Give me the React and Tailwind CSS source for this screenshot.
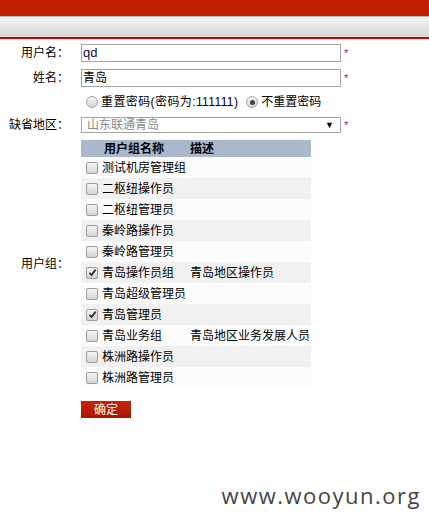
const groups = [
  { name: "测试机房管理组", desc: "", checked: false },
  { name: "二枢纽操作员", desc: "", checked: false },
  { name: "二枢纽管理员", desc: "", checked: false },
  { name: "秦岭路操作员", desc: "", checked: false },
  { name: "秦岭路管理员", desc: "", checked: false },
  { name: "青岛操作员组", desc: "青岛地区操作员", checked: true },
  { name: "青岛超级管理员", desc: "", checked: false },
  { name: "青岛管理员", desc: "", checked: true },
  { name: "青岛业务组", desc: "青岛地区业务发展人员", checked: false },
  { name: "株洲路操作员", desc: "", checked: false },
  { name: "株洲路管理员", desc: "", checked: false },
];

function Checkbox({ checked }) {
  return (
    <span className="flex h-[12px] w-[12px] items-center justify-center rounded-[2px] border border-[#9d9d9d] bg-gradient-to-b from-[#f4f4f4] to-[#d6d6d6]">
      {checked && (
        <svg width="9" height="9" viewBox="0 0 9 9">
          <path d="M1.5 4.8 L3.6 7 L7.6 1.6" fill="none" stroke="#333" strokeWidth="1.8" />
        </svg>
      )}
    </span>
  );
}

function Radio({ checked }) {
  return (
    <span className="flex h-[12px] w-[12px] items-center justify-center rounded-full border border-[#a5a5a5] bg-gradient-to-b from-[#f6f6f6] to-[#d4d4d4]">
      {checked && <span className="h-[5px] w-[5px] rounded-full bg-[#444]" />}
    </span>
  );
}

function Row({ label, children, star }) {
  return (
    <div className="flex items-center">
      <div className="w-[69px] shrink-0 text-right">{label}</div>
      <div className="ml-[12px] flex items-center">
        {children}
        {star && <span className="ml-[3px] text-[11px] text-[#b0105a]">*</span>}
      </div>
    </div>
  );
}

export default function App() {
  return (
    <div
      className="relative h-[523px] w-[429px] overflow-hidden bg-white text-[12px] leading-[16px] text-black"
      style={{ fontFamily: '"Liberation Sans", "Noto Sans CJK SC", sans-serif' }}
    >
      <div className="h-[16px] bg-[#c21f00]" />
      <div className="h-[21px] border-t border-[#b9b9b9] bg-gradient-to-b from-[#f2f2f2] to-[#d9d9d9]" />
      <div className="h-[2px] bg-[#d10000]" />

      <div className="mt-[5px]">
        <Row label="用户名：" star>
          <div className="flex h-[18px] w-[260px] items-center border border-[#a5a5a5] px-[1px] text-[13px] text-[#10104a]">
            qd
          </div>
        </Row>
      </div>
      <div className="mt-[7px]">
        <Row label="姓名：" star>
          <div className="flex h-[18px] w-[260px] items-center border border-[#a5a5a5] px-[1px] text-[12px]">
            青岛
          </div>
        </Row>
      </div>
      <div className="mt-[7px] flex h-[16px] items-center pl-[86px]">
        <Radio checked={false} />
        <span className="ml-[3px] tracking-[0.4px]">重置密码(密码为:111111)</span>
        <span className="ml-[8px]">
          <Radio checked />
        </span>
        <span className="ml-[3px]">不重置密码</span>
      </div>
      <div className="mt-[7px]">
        <Row label="缺省地区：" star>
          <div className="flex h-[16px] w-[260px] items-center justify-between border border-[#a5a5a5] pl-[5px] pr-[6px] text-[#8a8a8a]">
            <span>山东联通青岛</span>
            <span className="text-[9px] text-black">▼</span>
          </div>
        </Row>
      </div>

      <div className="mt-[7px] flex items-center">
        <div className="w-[69px] shrink-0 text-right">用户组：</div>
        <div className="ml-[12px] w-[230px]">
          <div className="flex h-[17px] items-center bg-[#aab8cb] font-bold">
            <span className="w-[109px] pl-[23px]">用户组名称</span>
            <span>描述</span>
          </div>
          {groups.map((g, i) => (
            <div
              key={g.name}
              className={`flex h-[21px] items-center ${i % 2 === 0 ? "bg-[#fcfcfc]" : "bg-[#f1f1f1]"}`}
            >
              <div className="flex w-[109px] items-center pl-[5px]">
                <Checkbox checked={g.checked} />
                <span className="ml-[4px]">{g.name}</span>
              </div>
              {g.desc && <span>{g.desc}</span>}
            </div>
          ))}
        </div>
      </div>

      <div className="mt-[13px] pl-[81px]">
        <button
          type="button"
          className="flex h-[17px] w-[50px] items-center justify-center bg-gradient-to-b from-[#c92400] to-[#a51800] text-[12px] text-white"
        >
          确定
        </button>
      </div>

      <div
        className="mt-[65px] flex justify-end pr-[8px] text-[22px] leading-[24px] tracking-[1.5px] text-[#444]"
        style={{ fontFamily: '"Open Sans", sans-serif' }}
      >
        www.wooyun.org
      </div>
    </div>
  );
}
